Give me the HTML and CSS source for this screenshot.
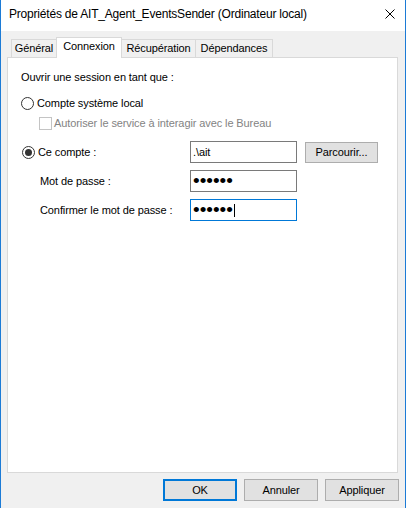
FILE: index.html
```html
<!DOCTYPE html>
<html lang="fr">
<head>
<meta charset="utf-8">
<title>Propriétés</title>
<link rel="stylesheet" href="styles.css">
</head>
<body>
<div class="window">
  <div class="titlebar">
    <span class="title">Propriétés de AIT_Agent_EventsSender (Ordinateur local)</span>
    <svg class="close" width="10" height="10" viewBox="0 0 10 10"><path d="M0.5 0.5 L9.5 9.5 M9.5 0.5 L0.5 9.5" stroke="#000" stroke-width="1" fill="none"/></svg>
  </div>
  <div class="main">
    <div class="tabs">
      <div class="tab tab-general">Général</div>
      <div class="tab tab-connexion active">Connexion</div>
      <div class="tab tab-recup">Récupération</div>
      <div class="tab tab-dep">Dépendances</div>
    </div>
    <div class="panel">
      <div class="heading">Ouvrir une session en tant que :</div>
      <div class="option">
        <span class="radio"></span><span class="opt-label">Compte système local</span>
      </div>
      <div class="check-row">
        <span class="checkbox"></span><span class="disabled">Autoriser le service à interagir avec le Bureau</span>
      </div>
      <div class="account">
        <div class="option"><span class="radio checked"></span><span class="opt-label">Ce compte :</span></div>
        <div class="field">.\ait</div>
        <div class="btn browse">Parcourir...</div>
        <div class="sub-label">Mot de passe :</div>
        <div class="field"><span class="dots">••••••</span></div>
        <div></div>
        <div class="sub-label">Confirmer le mot de passe :</div>
        <div class="field focused"><span class="dots">••••••</span><span class="caret"></span></div>
        <div></div>
      </div>
    </div>
    <div class="actions">
      <div class="btn default">OK</div>
      <div class="btn">Annuler</div>
      <div class="btn">Appliquer</div>
    </div>
  </div>
</div>
</body>
</html>
```
FILE: styles.css
```css
html, body {
  margin: 0;
  padding: 0;
  background: #fff;
}
body {
  width: 406px;
  height: 508px;
  overflow: hidden;
}
.window {
  height: 508px;
  box-sizing: border-box;
  border-left: 1px solid #1c7bd6;
  border-right: 1px solid #1c7bd6;
  display: flex;
  flex-direction: column;
  font-family: "Liberation Sans", Arial, sans-serif;
  font-size: 11px;
  letter-spacing: -0.1px;
  color: #000;
}
.titlebar {
  height: 31px;
  flex: none;
  box-sizing: border-box;
  background: #fff;
  display: flex;
  align-items: center;
  justify-content: space-between;
  padding: 0 10px 3px 8px;
}
.title {
  font-size: 12px;
  letter-spacing: -0.2px;
}
.close {
  display: block;
}
.main {
  flex: 1;
  background: #f0f0f0;
  padding: 6px 7px 7px 6px;
  display: flex;
  flex-direction: column;
}
.tabs {
  height: 20px;
  display: flex;
  align-items: flex-end;
  padding-left: 4px;
}
.tab {
  height: 18px;
  box-sizing: border-box;
  border: 1px solid #d9d9d9;
  border-bottom: 0;
  background: #f0f0f0;
  margin-right: -1px;
  text-align: center;
  line-height: 16px;
}
.tab-general { width: 46px; }
.tab-connexion { width: 66px; }
.tab-recup { width: 75px; }
.tab-dep { width: 78px; }
.tab.active {
  height: 21px;
  background: #fff;
  margin-bottom: -1px;
  position: relative;
  z-index: 1;
  line-height: 17px;
}
.panel {
  flex: 1;
  background: #fff;
  border: 1px solid #d9d9d9;
  padding: 13px 13px 0 13px;
}
.heading {
  line-height: 13px;
}
.option {
  display: flex;
  align-items: center;
  height: 13px;
  margin-top: 13px;
}
.radio {
  width: 13px;
  height: 13px;
  box-sizing: border-box;
  border: 1px solid #333;
  border-radius: 50%;
  background: #fff;
  flex: none;
  display: flex;
  align-items: center;
  justify-content: center;
}
.radio.checked::after {
  content: "";
  width: 7px;
  height: 7px;
  border-radius: 50%;
  background: #333;
}
.opt-label {
  margin-left: 3px;
  line-height: 13px;
}
.check-row {
  display: flex;
  align-items: center;
  height: 13px;
  margin-top: 7px;
  padding-left: 18px;
}
.checkbox {
  width: 13px;
  height: 13px;
  box-sizing: border-box;
  border: 1px solid #c4c4c4;
  background: #fff;
  flex: none;
}
.disabled {
  margin-left: 2px;
  color: #838383;
  line-height: 13px;
}
.account {
  margin-top: 11px;
  display: grid;
  grid-template-columns: 161px 107px 73px;
  grid-auto-rows: 22px;
  column-gap: 8px;
  row-gap: 7px;
  align-items: center;
}
.account .option {
  margin-top: 0;
  padding-left: 1px;
}
.sub-label {
  padding-left: 19px;
  line-height: 13px;
}
.field {
  height: 22px;
  box-sizing: border-box;
  border: 1px solid #7a7a7a;
  background: #fff;
  padding-left: 2px;
  line-height: 19px;
  display: flex;
  align-items: center;
  white-space: pre;
}
.field.focused {
  border-color: #0078d7;
}
.dots {
  font-size: 19px;
  letter-spacing: 0;
  line-height: 20px;
  height: 20px;
}
.caret {
  display: block;
  width: 1px;
  height: 13px;
  background: #000;
  margin-left: 1px;
}
.btn {
  height: 22px;
  box-sizing: border-box;
  border: 1px solid #adadad;
  background: #e1e1e1;
  display: flex;
  align-items: center;
  justify-content: center;
  line-height: 13px;
}
.browse {
  height: 21px;
  align-self: start;
  margin-top: 1px;
}
.actions {
  display: flex;
  justify-content: flex-end;
  gap: 7px;
  margin-top: 6px;
  margin-right: -1px;
}
.actions .btn {
  width: 74px;
}
.btn.default {
  border-color: #0078d7;
  box-shadow: inset 0 0 0 1px #0078d7;
}
```
